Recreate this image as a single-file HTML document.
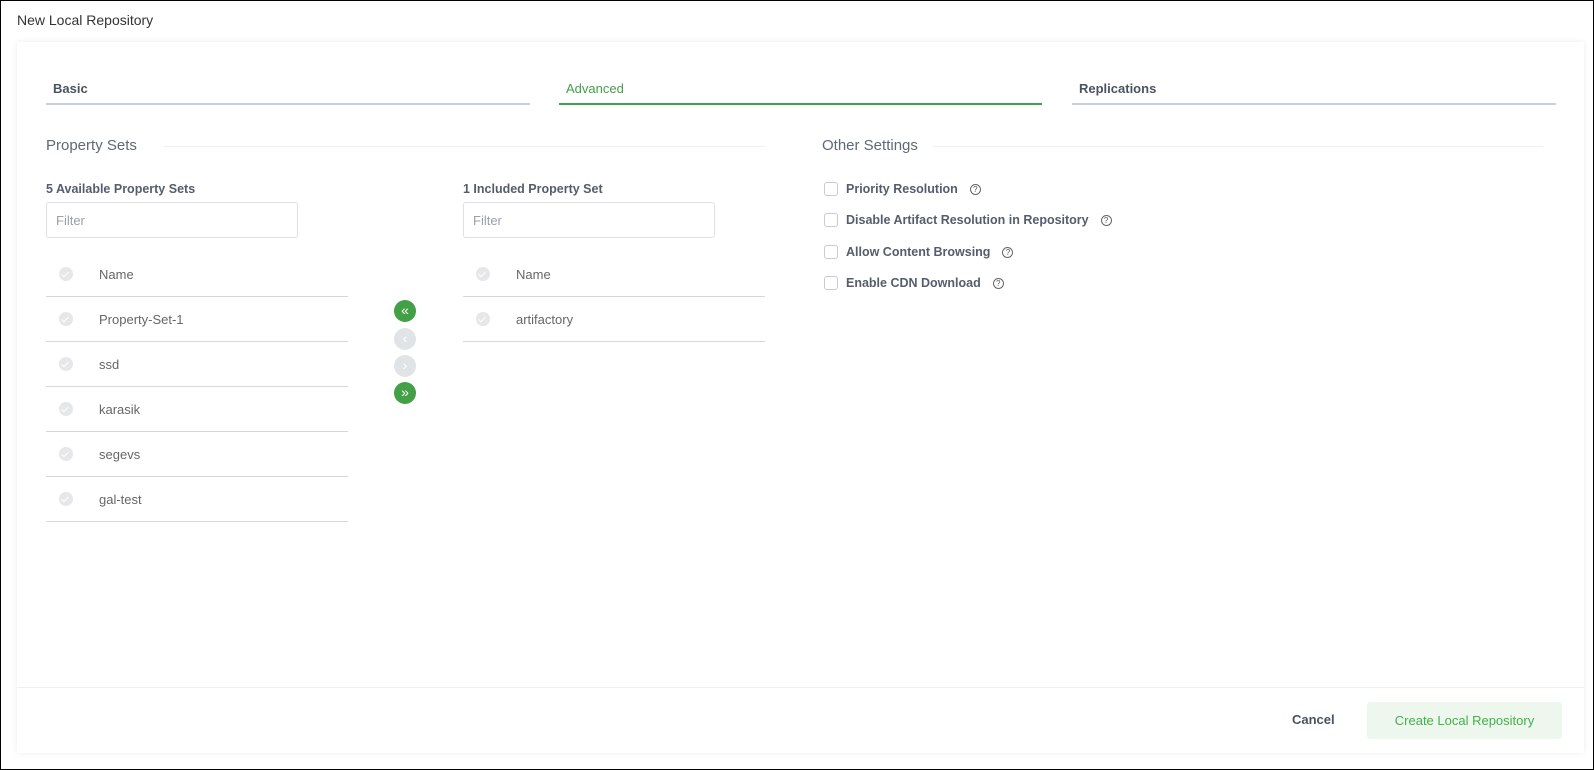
<!DOCTYPE html>
<html><head><style>
*{box-sizing:border-box;margin:0;padding:0}
body{width:1594px;height:770px;background:#fff;font-family:"Liberation Sans",sans-serif;position:relative;overflow:hidden;border:1px solid #000;color:#3d4656}
.a{position:absolute}
.card{left:16px;top:41px;width:1567px;height:711px;background:#fff;box-shadow:0 0 6px rgba(0,0,0,.08)}
.tab{font-size:13px;font-weight:bold;color:#4a5263;padding-left:7px;height:24px;border-bottom:2px solid #c5cfe0}
.h{font-size:15px;color:#5f6877}
.lab{font-size:12.5px;font-weight:bold;color:#555d6c}
.inp{border:1px solid #dde1e6;border-radius:3px;height:36px;font-size:13px;color:#9aa0a8;padding:10px 9px}
.row{height:45px;border-bottom:1px solid #d5d7da;font-size:13px;color:#666;display:flex;align-items:center}
.ck{width:14px;height:14px;border-radius:50%;background:#e6e7e9;margin:0 26px 0 13px;position:relative}
.ck:after{content:"";position:absolute;left:4px;top:3px;width:3px;height:6px;border:solid #fff;border-width:0 1.3px 1.3px 0;transform:rotate(45deg)}
.btn{width:22px;height:22px;border-radius:50%;color:#fff;font-size:14px;text-align:center;line-height:21px;left:393px}
.cb{width:14px;height:14px;border:1px solid #c6cbd6;border-radius:3px}
.opt{font-size:12.5px;font-weight:bold;color:#555d6c}
.q{display:inline-block;width:11px;height:11px;border:1px solid #666;border-radius:50%;font-size:8px;line-height:9px;text-align:center;margin-left:12px;font-weight:normal;color:#555;vertical-align:1px}
</style></head><body>
<div class="a" style="left:16px;top:11px;font-size:14px;color:#333">New Local Repository</div>
<div class="a card"></div>
<div class="a tab" style="left:45px;top:80px;width:484px">Basic</div>
<div class="a tab" style="left:558px;top:80px;width:483px;border-color:#43a047;color:#43a047;font-weight:normal">Advanced</div>
<div class="a tab" style="left:1071px;top:80px;width:484px">Replications</div>

<div class="a h" style="left:45px;top:136px">Property Sets</div>
<div class="a" style="left:163px;top:145px;width:601px;height:1px;background:#edf0f3"></div>
<div class="a h" style="left:821px;top:136px">Other Settings</div>
<div class="a" style="left:932px;top:145px;width:610px;height:1px;background:#edf0f3"></div>

<div class="a lab" style="left:45px;top:181px">5 Available Property Sets</div>
<div class="a inp" style="left:45px;top:201px;width:252px">Filter</div>
<div class="a lab" style="left:462px;top:181px">1 Included Property Set</div>
<div class="a inp" style="left:462px;top:201px;width:252px">Filter</div>

<div class="a" style="left:45px;top:251px;width:302px">
<div class="row"><span class="ck"></span>Name</div>
<div class="row"><span class="ck"></span>Property-Set-1</div>
<div class="row"><span class="ck"></span>ssd</div>
<div class="row"><span class="ck"></span>karasik</div>
<div class="row"><span class="ck"></span>segevs</div>
<div class="row"><span class="ck"></span>gal-test</div>
</div>
<div class="a" style="left:462px;top:251px;width:302px">
<div class="row"><span class="ck"></span>Name</div>
<div class="row"><span class="ck"></span>artifactory</div>
</div>

<div class="a btn" style="top:299px;background:#43a047">«</div>
<div class="a btn" style="top:327px;background:#e1e4e7">‹</div>
<div class="a btn" style="top:354px;background:#e1e4e7">›</div>
<div class="a btn" style="top:381px;background:#43a047">»</div>

<div class="a cb" style="left:823px;top:181px"></div><div class="a opt" style="left:845px;top:181px">Priority Resolution<span class="q">?</span></div>
<div class="a cb" style="left:823px;top:212px"></div><div class="a opt" style="left:845px;top:212px">Disable Artifact Resolution in Repository<span class="q">?</span></div>
<div class="a cb" style="left:823px;top:244px"></div><div class="a opt" style="left:845px;top:244px">Allow Content Browsing<span class="q">?</span></div>
<div class="a cb" style="left:823px;top:275px"></div><div class="a opt" style="left:845px;top:275px">Enable CDN Download<span class="q">?</span></div>

<div class="a" style="left:16px;top:686px;width:1567px;height:1px;background:#eef0f2"></div>
<div class="a" style="left:1291px;top:711px;font-size:13px;font-weight:bold;color:#4a5263">Cancel</div>
<div class="a" style="left:1366px;top:701px;width:195px;height:37px;background:#edf7ee;border-radius:3px;color:#43b049;font-size:13px;text-align:center;line-height:37px">Create Local Repository</div>
</body></html>
